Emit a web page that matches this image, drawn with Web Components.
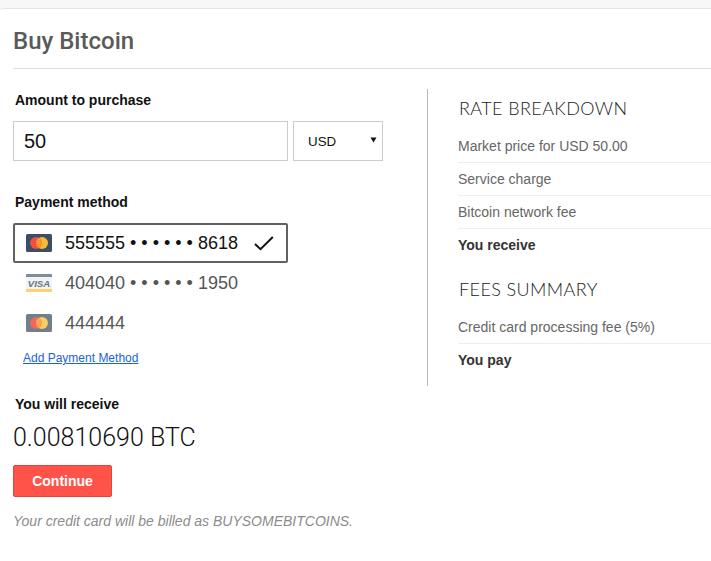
<!DOCTYPE html>
<html>
<head>
<meta charset="utf-8">
<style>
  html, body { margin: 0; padding: 0; background: #fff; overflow: hidden; }
  body { font-family: "Liberation Sans", Arial, sans-serif; width: 711px; height: 561px; }
</style>
</head>
<body>
<buy-panel>
  <div slot="left">
    <field-label>Amount to purchase</field-label>
    <amount-field value="50" currency="USD"></amount-field>
    <field-label style="margin-top:31px">Payment method</field-label>
    <payment-list>
      <card-option number="555555 • • • • • • 8618" type="mc-dark" selected></card-option>
      <card-option number="404040 • • • • • • 1950" type="visa"></card-option>
      <card-option number="444444" type="mc-grey"></card-option>
    </payment-list>
  </div>
  <div slot="right">
    <rate-table heading="RATE BREAKDOWN">
      <rate-row>Market price for USD 50.00</rate-row>
      <rate-row>Service charge</rate-row>
      <rate-row>Bitcoin network fee</rate-row>
      <rate-row total>You receive</rate-row>
    </rate-table>
    <rate-table heading="FEES SUMMARY" style="margin-top:8px">
      <rate-row>Credit card processing fee (5%)</rate-row>
      <rate-row total>You pay</rate-row>
    </rate-table>
  </div>
  <receive-summary slot="bottom" amount="0.00810690 BTC" biller="BUYSOMEBITCOINS"></receive-summary>
</buy-panel>

<script>
class BuyPanel extends HTMLElement {
  constructor() {
    super();
    this.attachShadow({ mode: "open" });
    this.shadowRoot.innerHTML = `
      <style>
        :host { display: block; background: #f7f7f7; padding-top: 8px; }
        .panel {
          background: #fff;
          border-top: 1px solid #e4e4e4;
          border-top-left-radius: 3px;
          padding: 0 0 0 13px;
          height: 552px;
          box-sizing: border-box;
        }
        h1 {
          margin: 0;
          height: 60px;
          box-sizing: border-box;
          padding-top: 16px;
          font: 500 24px/32px Roboto, sans-serif;
          color: #5a5a5a;
          border-bottom: 1px solid #ddd;
        }
        .cols { display: flex; margin-top: 20px; }
        .left { width: 414px; height: 297px; border-right: 1px solid #bbb; box-sizing: content-box; }
        .left ::slotted(*) { padding-top: 1px; }
        .right { flex: 1; padding-left: 30px; }
      </style>
      <div class="panel">
        <h1>Buy Bitcoin</h1>
        <div class="cols">
          <div class="left"><slot name="left"></slot></div>
          <div class="right"><slot name="right"></slot></div>
        </div>
        <slot name="bottom"></slot>
      </div>`;
  }
}

class FieldLabel extends HTMLElement {
  constructor() {
    super();
    this.attachShadow({ mode: "open" });
    this.shadowRoot.innerHTML = `
      <style>
        :host { display: block; font: bold 14px/20px "Liberation Sans", Arial, sans-serif; color: #111; padding-left: 2px; }
      </style>
      <slot></slot>`;
  }
}

class AmountField extends HTMLElement {
  constructor() {
    super();
    this.attachShadow({ mode: "open" });
  }
  connectedCallback() {
    this.shadowRoot.innerHTML = `
      <style>
        :host { display: flex; gap: 5px; margin-top: 11px; }
        .box {
          height: 40px;
          box-sizing: border-box;
          border: 1px solid #ccc;
          background: #fff;
          color: #111;
          display: flex;
          align-items: center;
        }
        .amount { width: 275px; padding-left: 10px; font: 20px "Liberation Sans", Arial, sans-serif; }
        .currency { width: 90px; padding: 0 5px 0 14px; justify-content: space-between; font: 13.33px "Liberation Sans", Arial, sans-serif; }
        svg { display: block; margin-top: -2px; }
      </style>
      <div class="box amount">${this.getAttribute("value")}</div>
      <div class="box currency">
        <span>${this.getAttribute("currency")}</span>
        <svg width="7" height="6" viewBox="0 0 7 6"><path d="M0.5 0.5h6L3.5 5.5z" fill="#111"/></svg>
      </div>`;
  }
}

class PaymentList extends HTMLElement {
  constructor() {
    super();
    this.attachShadow({ mode: "open" });
    this.shadowRoot.innerHTML = `
      <style>
        :host { display: block; margin-top: 11px; }
        a {
          display: inline-block;
          margin: 6px 0 0 10px;
          font: 12px/18px "Liberation Sans", Arial, sans-serif;
          color: #1a63d8;
          text-decoration: underline;
        }
      </style>
      <slot></slot>
      <a href="#">Add Payment Method</a>`;
  }
}

const STRIPES = `<path d="M12 5.5h2M11.5 7.5h3M11.5 9.5h3M12 11.5h2" stroke="#f9c24a" stroke-width="0.8" opacity="0.7"/>`;

const CARD_ART = {
  "mc-dark": `
    <rect width="26" height="18" rx="1.5" fill="#3a4f66"/>
    <circle cx="10" cy="9" r="6" fill="#ef4f3e"/>
    <circle cx="16" cy="9" r="6" fill="#f7b92f"/>
    <path d="M13 3.8a6 6 0 0 1 0 10.4a6 6 0 0 1 0-10.4z" fill="#f58a2e"/>${STRIPES}`,
  "mc-grey": `
    <rect width="26" height="18" rx="1.5" fill="#6f7f8c"/>
    <circle cx="10" cy="9" r="6" fill="#f2675a"/>
    <circle cx="16" cy="9" r="6" fill="#f8cd63"/>
    <path d="M13 3.8a6 6 0 0 1 0 10.4a6 6 0 0 1 0-10.4z" fill="#f5a058"/>${STRIPES}`,
  "visa": `
    <rect width="26" height="18" rx="1" fill="#f1f3f5"/>
    <path d="M0 3V1a1 1 0 0 1 1-1h24a1 1 0 0 1 1 1v2z" fill="#7d8d9b"/>
    <path d="M0 15h26v2a1 1 0 0 1-1 1H1a1 1 0 0 1-1-1z" fill="#f8d36e"/>
    <text x="13" y="12.8" text-anchor="middle" font-family="Liberation Sans, Arial, sans-serif" font-size="9.6" font-weight="bold" font-style="italic" fill="#66767f">VISA</text>`
};

class CardOption extends HTMLElement {
  constructor() {
    super();
    this.attachShadow({ mode: "open" });
  }
  connectedCallback() {
    const check = this.hasAttribute("selected")
      ? `<svg class="check" width="20" height="15" viewBox="0 0 20 15"><path d="M1 8l5.5 5.2L18.8 1" fill="none" stroke="#111" stroke-width="2"/></svg>`
      : "";
    this.shadowRoot.innerHTML = `
      <style>
        :host {
          display: flex;
          align-items: center;
          width: 275px;
          height: 40px;
          box-sizing: border-box;
          padding-left: 11px;
          font: 18px "Liberation Sans", Arial, sans-serif;
          color: #555;
          border: 2px solid transparent;
          border-radius: 2px;
        }
        :host([selected]) { border-color: #616161; color: #111; }
        .art { display: block; flex: none; margin-right: 13px; }
        .check { margin-left: auto; margin-right: 12px; }
      </style>
      <svg class="art" width="26" height="18" viewBox="0 0 26 18">${CARD_ART[this.getAttribute("type")]}</svg>
      <span>${this.getAttribute("number")}</span>
      ${check}`;
  }
}

class RateTable extends HTMLElement {
  constructor() {
    super();
    this.attachShadow({ mode: "open" });
  }
  connectedCallback() {
    this.shadowRoot.innerHTML = `
      <style>
        :host { display: block; }
        h2 { margin: 0 0 0 1px; height: 41px; font: 300 18px/38px Lato, sans-serif; color: #222; letter-spacing: 0.4px; }
      </style>
      <h2>${this.getAttribute("heading")}</h2>
      <slot></slot>`;
  }
}

class RateRow extends HTMLElement {
  constructor() {
    super();
    this.attachShadow({ mode: "open" });
    this.shadowRoot.innerHTML = `
      <style>
        :host {
          display: block;
          height: 33px;
          box-sizing: border-box;
          font: 14px/32px "Liberation Sans", Arial, sans-serif;
          color: #666;
          border-bottom: 1px solid #eee;
        }
        :host([total]) { font-weight: bold; color: #333; border-bottom: 0; }
      </style>
      <slot></slot>`;
  }
}

class ReceiveSummary extends HTMLElement {
  constructor() {
    super();
    this.attachShadow({ mode: "open" });
  }
  connectedCallback() {
    this.shadowRoot.innerHTML = `
      <style>
        :host { display: block; margin-top: 8px; }
        .label { font: bold 14px/20px "Liberation Sans", Arial, sans-serif; color: #111; padding-left: 2px; }
        .amount { font: 300 25px/32px Roboto, sans-serif; color: #111; margin-top: 8px; }
        button {
          display: block;
          width: 99px;
          height: 32px;
          margin-top: 11px;
          padding: 0;
          background: #ff5349;
          border: 1px solid #e0463d;
          border-radius: 2px;
          color: #fff;
          font: bold 14px "Liberation Sans", Arial, sans-serif;
        }
        p { margin: 14px 0 0; font: italic 14px/20px "Liberation Sans", Arial, sans-serif; color: #8c8c8c; }
      </style>
      <div class="label">You will receive</div>
      <div class="amount">${this.getAttribute("amount")}</div>
      <button>Continue</button>
      <p>Your credit card will be billed as ${this.getAttribute("biller")}.</p>`;
  }
}

customElements.define("buy-panel", BuyPanel);
customElements.define("field-label", FieldLabel);
customElements.define("amount-field", AmountField);
customElements.define("payment-list", PaymentList);
customElements.define("card-option", CardOption);
customElements.define("rate-table", RateTable);
customElements.define("rate-row", RateRow);
customElements.define("receive-summary", ReceiveSummary);
</script>
</body>
</html>
